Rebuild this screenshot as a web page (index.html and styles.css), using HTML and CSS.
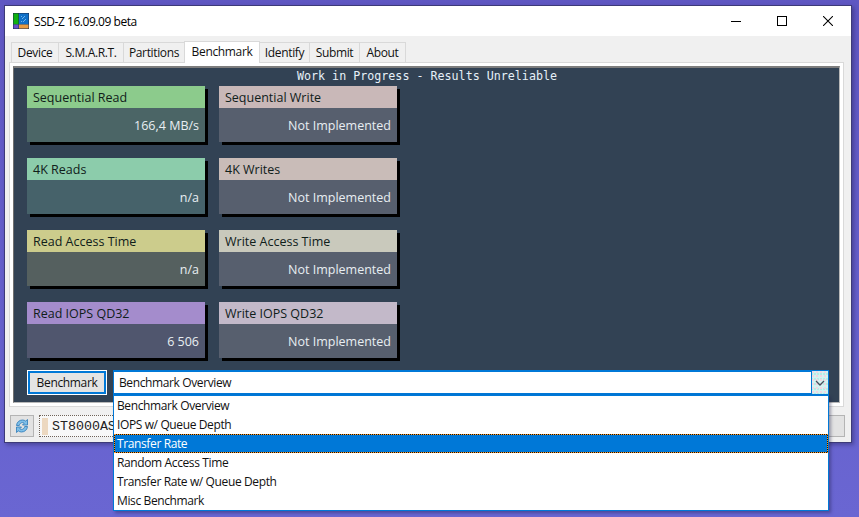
FILE: index.html
```html
<!DOCTYPE html>
<html lang="en">
<head>
<meta charset="utf-8">
<title>SSD-Z</title>
<link rel="stylesheet" href="styles.css">
</head>
<body>
<div class="window">
  <header class="titlebar">
    <svg class="app-icon" width="16" height="16" viewBox="0 0 16 16">
      <rect width="16" height="16" fill="#1a2a4a"/>
      <rect x="0.5" y="0.5" width="5" height="11" fill="#10b010"/>
      <rect x="0.5" y="11.5" width="5" height="4" fill="#6a50c8"/>
      <rect x="6" y="0.5" width="9.5" height="11" fill="#1070c8"/>
      <rect x="6" y="11.5" width="9.5" height="4" fill="#e89a40"/>
      <path d="M8 3h1v1H8zM11 3h1v1h-1zM9 5h1v1H9zM12 6h1v1h-1zM8 8h1v1H8zM10 8h1v1h-1zM10 4h1v1h-1zM11 7h1v1h-1z" fill="#70b4ec"/>
    </svg>
    <span class="title">SSD-Z 16.09.09 beta</span>
    <div class="controls">
      <svg width="10" height="10" viewBox="0 0 10 10"><path d="M0 5.5H10" stroke="#000" fill="none"/></svg>
      <svg width="10" height="10" viewBox="0 0 10 10"><rect x="0.5" y="0.5" width="9" height="9" stroke="#000" fill="none"/></svg>
      <svg width="10" height="10" viewBox="0 0 10 10"><path d="M0 0L10 10M10 0L0 10" stroke="#000" stroke-width="1.05" fill="none"/></svg>
    </div>
  </header>
  <div class="client">
    <nav class="tabs">
      <span class="tab w-device">Device</span>
      <span class="tab w-smart">S.M.A.R.T.</span>
      <span class="tab w-part">Partitions</span>
      <span class="tab active">Benchmark</span>
      <span class="tab w-ident">Identify</span>
      <span class="tab w-sub">Submit</span>
      <span class="tab w-about">About</span>
      <span class="tab-rest"></span>
    </nav>
    <section class="frame">
      <div class="panel">
        <div class="notice">Work in Progress - Results Unreliable</div>
        <div class="cards">
          <div class="card c-seq-r"><div class="card-head">Sequential Read</div><div class="card-val">166,4 MB/s</div></div>
          <div class="card c-w1"><div class="card-head">Sequential Write</div><div class="card-val">Not Implemented</div></div>
          <div class="card c-4k-r"><div class="card-head">4K Reads</div><div class="card-val">n/a</div></div>
          <div class="card c-w2"><div class="card-head">4K Writes</div><div class="card-val">Not Implemented</div></div>
          <div class="card c-acc-r"><div class="card-head">Read Access Time</div><div class="card-val">n/a</div></div>
          <div class="card c-w3"><div class="card-head">Write Access Time</div><div class="card-val">Not Implemented</div></div>
          <div class="card c-iops-r"><div class="card-head">Read IOPS QD32</div><div class="card-val">6 506</div></div>
          <div class="card c-w4"><div class="card-head">Write IOPS QD32</div><div class="card-val">Not Implemented</div></div>
        </div>
        <div class="actions">
          <button class="bench-btn"><span>Benchmark</span></button>
          <div class="combo">
            <div class="combo-box">
              <span class="combo-text">Benchmark Overview</span>
              <span class="combo-arrow">
                <svg width="10" height="6" viewBox="0 0 10 6"><path d="M1 1L5 5L9 1" stroke="#44505c" stroke-width="1.3" fill="none"/></svg>
              </span>
            </div>
            <ul class="combo-list">
              <li>Benchmark Overview</li>
              <li>IOPS w/ Queue Depth</li>
              <li class="selected">Transfer Rate</li>
              <li>Random Access Time</li>
              <li>Transfer Rate w/ Queue Depth</li>
              <li>Misc Benchmark</li>
            </ul>
          </div>
        </div>
      </div>
    </section>
    <footer class="status">
      <button class="refresh">
        <svg width="16" height="16" viewBox="0 0 16 16">
          <path d="M2.5 7.5C2.8 4.2 5.3 2 8.5 2C9.8 2 10.8 2.4 11.7 3.1L13.5 1.5V7H8.5L10.2 5.2C9.6 4.8 9.1 4.6 8.5 4.6C6.9 4.6 5.6 5.7 5.3 7.5Z" fill="#7fbfe8" stroke="#2a78b8" stroke-width="0.8"/>
          <path d="M13.5 8.5C13.2 11.8 10.7 14 7.5 14C6.2 14 5.2 13.6 4.3 12.9L2.5 14.5V9H7.5L5.8 10.8C6.4 11.2 6.9 11.4 7.5 11.4C9.1 11.4 10.4 10.3 10.7 8.5Z" fill="#7fbfe8" stroke="#2a78b8" stroke-width="0.8"/>
        </svg>
      </button>
      <div class="drive">
        <span class="drive-mark"></span>
        <span class="drive-name">ST8000AS</span>
      </div>
      <button class="status-end"></button>
    </footer>
  </div>
</div>
</body>
</html>
```
FILE: styles.css
```css
* { box-sizing: border-box; }
html, body { height: 100%; }
body {
  margin: 0;
  overflow: hidden;
  padding: 5px 0 0 4px;
  background: linear-gradient(180deg, #5f57c2 0%, #6a66d2 100%);
  font-family: "Open Sans", "Noto Sans", sans-serif;
  font-size: 12px;
  color: #000;
}
.window {
  width: 848px;
  height: 438px;
  border: 1px solid #3d3a78;
  background: #f0f0f0;
  box-shadow: 2px 2px 4px rgba(40, 36, 90, .45);
}
.titlebar {
  height: 30px;
  background: #fff;
  display: flex;
  align-items: center;
  padding-left: 8px;
}
.app-icon { flex: none; }
.title { margin-left: 5px; font-size: 12px; letter-spacing: -0.45px; }
.controls { margin-left: auto; display: flex; gap: 36px; padding-right: 18px; align-items: center; }
.client { height: 406px; padding: 6px 6px 0 4px; display: flex; flex-direction: column; }
.tabs { display: flex; height: 20px; padding-left: 2px; align-items: flex-end; position: relative; z-index: 1; }
.tab {
  height: 20px;
  margin-left: -1px;
  border: 1px solid #d9d9d9;
  border-bottom: 0;
  background: #f0f0f0;
  display: flex;
  align-items: center;
  justify-content: center;
  font-size: 12px;
  letter-spacing: -0.35px;
  color: #111;
}
.tab:first-child { margin-left: 0; }
.tab-rest {
  flex: 1;
  height: 15px;
  margin: 0 0 2px 6px;
  background-image: radial-gradient(circle at 1px 1px, #dcdcdc 0 .6px, transparent .7px);
  background-size: 6px 8px;
}
.w-device { width: 48px; }
.w-smart { width: 66px; }
.w-part { width: 62px; }
.w-ident { width: 51px; }
.w-sub { width: 51px; }
.w-about { width: 47px; }
.tab.active {
  width: 76px;
  height: 22px;
  background: #fff;
  z-index: 2;
  padding-bottom: 3px;
  margin-bottom: -1px;
}
.frame {
  width: 835px;
  height: 345px;
  background: #fff;
  border: 1px solid #d9d9d9;
  padding: 3px;
}
.panel {
  height: 100%;
  background: #324254;
  border: 1px solid #707070;
  border-top: 2px solid #7d7d7d;
  border-bottom-color: #b8b8b8;
  border-right-color: #b8b8b8;
  padding: 0 0 0 13px;
  position: relative;
}
.notice {
  height: 15px;
  margin: 1px 0 2px -13px;
  padding-left: 1px;
  text-align: center;
  font-family: "DejaVu Sans Mono", "Liberation Mono", monospace;
  font-size: 11.68px;
  line-height: 15px;
  color: #e6f0f8;
}
.cards {
  display: grid;
  grid-template-columns: 178px 178px;
  grid-auto-rows: 56px;
  column-gap: 14px;
  row-gap: 16px;
}
.card { box-shadow: 3px 3px 0 #000; display: flex; flex-direction: column; }
.card-head { height: 22px; flex: none; padding: 0 6px; line-height: 23px; font-size: 12.5px; color: #10201a; }
.card-val { height: 34px; flex: none; overflow: hidden; padding: 0 6px; text-align: right; line-height: 36px; font-size: 12.5px; color: #e8eef2; }
.c-seq-r .card-head { background: #8ccb8c; }
.c-seq-r .card-val { background: #4b6566; }
.c-4k-r .card-head { background: #8cccab; }
.c-4k-r .card-val { background: #46626a; }
.c-acc-r .card-head { background: #cccc8c; }
.c-acc-r .card-val { background: #55605f; }
.c-iops-r .card-head { background: #a48ccc; }
.c-iops-r .card-val { background: #50566e; }
.c-w1 .card-head { background: #c9b8b8; }
.c-w2 .card-head { background: #c9bcb8; }
.c-w3 .card-head { background: #c9c9bc; }
.c-w4 .card-head { background: #c3b9c9; }
.c-w1 .card-val, .c-w2 .card-val, .c-w3 .card-val, .c-w4 .card-val { background: #575f6e; }
.actions { display: flex; gap: 6px; margin-top: 12px; }
.bench-btn {
  width: 80px;
  height: 25px;
  padding: 0;
  border: 1px solid #fff;
  background: #0078d7;
  font: inherit;
}
.bench-btn span {
  display: flex;
  align-items: center;
  justify-content: center;
  height: 19px;
  margin: 2px;
  background: #e4e4e4;
  color: #111;
  font-size: 12px;
  letter-spacing: -0.35px;
}
.combo { width: 716px; position: relative; }
.combo-box {
  height: 25px;
  border: 2px solid #0078d7;
  border-left-width: 1px;
  background: #fff;
  display: flex;
  align-items: center;
  padding-left: 5px;
}
.combo-text { flex: 1; font-size: 12px; letter-spacing: -0.38px; color: #111; }
.combo-arrow {
  width: 17px;
  height: 23px;
  margin: -1px -1px -1px 0;
  border-left: 1px solid #0078d7;
  background-color: #d4f2f0;
  background-image:
    radial-gradient(circle at 1px 1px, #f4d4e0 0 .7px, transparent .8px),
    radial-gradient(circle at 1px 1px, #b4ece6 0 .7px, transparent .8px);
  background-size: 4px 4px, 3px 5px;
  background-position: 0 0, 2px 2px;
  display: flex;
  align-items: center;
  justify-content: center;
}
.combo-list {
  position: absolute;
  left: 0;
  right: 0;
  top: 25px;
  margin: 0;
  padding: 0;
  list-style: none;
  height: 116px;
  background: #fff;
  border: 1px solid #0078d7;
  box-shadow: 2px 2px 3px rgba(30, 30, 70, .4);
  z-index: 5;
}
.combo-list li {
  height: 19px;
  line-height: 19px;
  padding-left: 3px;
  font-size: 12px;
  letter-spacing: -0.38px;
  color: #111;
}
.combo-list .selected {
  background: #0078d7;
  color: #fff;
  box-shadow: inset 0 0 0 1px #111;
  outline: 1px dotted #ff9a20;
  outline-offset: -1px;
}
.status { display: flex; gap: 5px; margin-top: 8px; padding-left: 1px; }
.refresh {
  width: 24px;
  height: 22px;
  padding: 0;
  border: 1px solid #b4b4b4;
  background: #e2e2e2;
  display: flex;
  align-items: center;
  justify-content: center;
}
.drive {
  flex: 1;
  height: 22px;
  border: 1px dotted #6e6258;
  background: #f8f8f8;
  display: flex;
  align-items: center;
  padding-left: 2px;
}
.drive-mark { width: 6px; height: 17px; background: #ecd8c0; }
.drive-name { margin-left: 4px; font-family: "Liberation Mono", monospace; font-size: 13.3px; color: #222; }
.status-end {
  width: 26px;
  height: 22px;
  margin-left: -1px;
  padding: 0;
  border: 1px solid #b4b4b4;
  background: #e2e2e2;
}
```
